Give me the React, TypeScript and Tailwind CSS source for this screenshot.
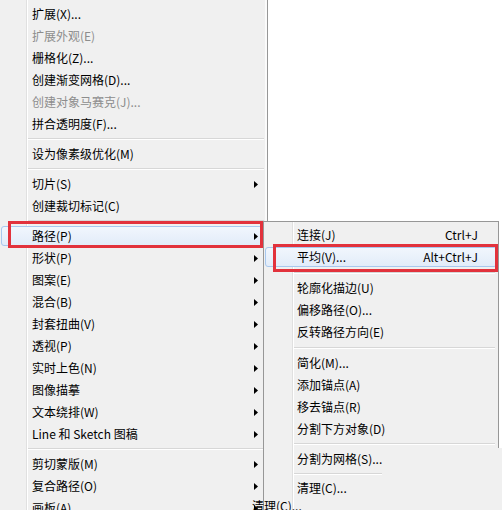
import React from 'react';

type Item =
  | { sep: true; h?: string; short?: boolean }
  | { sep?: false; label: string; disabled?: boolean; arrow?: boolean; shortcut?: string; active?: boolean };

const mainItems: Item[] = [
  { label: '扩展(X)...' },
  { label: '扩展外观(E)', disabled: true },
  { label: '栅格化(Z)...' },
  { label: '创建渐变网格(D)...' },
  { label: '创建对象马赛克(J)...', disabled: true },
  { label: '拼合透明度(F)...' },
  { sep: true },
  { label: '设为像素级优化(M)' },
  { sep: true },
  { label: '切片(S)', arrow: true },
  { label: '创建裁切标记(C)' },
  { sep: true },
  { label: '路径(P)', arrow: true, active: true },
  { label: '形状(P)', arrow: true },
  { label: '图案(E)', arrow: true },
  { label: '混合(B)', arrow: true },
  { label: '封套扭曲(V)', arrow: true },
  { label: '透视(P)', arrow: true },
  { label: '实时上色(N)', arrow: true },
  { label: '图像描摹', arrow: true },
  { label: '文本绕排(W)', arrow: true },
  { label: 'Line 和 Sketch 图稿', arrow: true },
  { sep: true },
  { label: '剪切蒙版(M)', arrow: true },
  { label: '复合路径(O)', arrow: true },
  { label: '画板(A)', arrow: true },
];

const Arrow = () => (
  <svg width="4" height="7" viewBox="0 0 4 7" className="shrink-0">
    <polygon points="0,0 4,3.5 0,7" fill="#000" />
  </svg>
);

const Separator = ({ h = 'h-[8px]', short = false }: { h?: string; short?: boolean }) => (
  <div className={`${h} flex items-center pl-[28px] pr-[3px]`}>
    <div className={`${short ? 'w-[90px]' : 'flex-1'} border-t border-[#d7d7d7] border-b border-b-white`} />
  </div>
);

const MenuRow = ({ item, sub = false }: { item: Exclude<Item, { sep: true }>; sub?: boolean }) => (
  <div className={`relative h-[22px] flex items-center ${sub ? 'pl-[33px] pr-[20px]' : 'pl-[32px] pr-[9px]'}`}>
    {item.active && (
      <div
        className={`absolute top-[1px] bottom-[1px] ${sub ? 'left-[1px] right-[1px]' : 'left-[1px] right-[4px]'} rounded-[3px] border border-[#a8c8ee] bg-gradient-to-b from-[#f1f6fd] to-[#e2ecf9]`}
      />
    )}
    <span className={`relative flex-1 whitespace-nowrap ${item.disabled ? 'text-[#8d8d8d]' : 'text-black'}`}>{item.label}</span>
    {item.shortcut && <span className="relative whitespace-nowrap text-black">{item.shortcut}</span>}
    {item.arrow && (
      <span className="relative">
        <Arrow />
      </span>
    )}
  </div>
);

export default function App() {
  return (
    <div
      className="relative w-[502px] h-[510px] overflow-hidden bg-white text-[12px] leading-[22px]"
      style={{ fontFamily: '"Noto Sans CJK SC", "Microsoft YaHei", sans-serif' }}
    >
      {/* main menu */}
      <div className="relative w-[268px] h-full bg-[#f0f0f0] border-r border-[#979797] shadow-[inset_-2px_0_0_#fbfbfb] pt-[3px]">
        <div className="absolute left-[26px] top-0 bottom-0 w-[2px] border-l border-[#e0e0e0] border-r border-r-white" />
        {mainItems.map((it, i) =>
          it.sep ? <Separator key={i} /> : <MenuRow key={i} item={it} />
        )}
      </div>

      {/* submenu: 路径 */}
      <div className="absolute left-[263px] top-[221px] right-0 bottom-0 flex flex-col">
        <div className="relative mr-[3px] pt-[2px] bg-[#f0f0f0] border-l border-t border-r border-[#979797]">
          <div className="absolute left-[28px] top-0 bottom-0 w-[2px] border-l border-[#e0e0e0] border-r border-r-white" />
          <MenuRow sub item={{ label: '连接(J)', shortcut: 'Ctrl+J' }} />
          <MenuRow sub item={{ label: '平均(V)...', shortcut: 'Alt+Ctrl+J', active: true }} />
          <Separator h="h-[9px]" />
          <MenuRow sub item={{ label: '轮廓化描边(U)' }} />
          <MenuRow sub item={{ label: '偏移路径(O)...' }} />
          <MenuRow sub item={{ label: '反转路径方向(E)' }} />
          <Separator h="h-[9px]" />
          <MenuRow sub item={{ label: '简化(M)...' }} />
          <MenuRow sub item={{ label: '添加锚点(A)' }} />
          <MenuRow sub item={{ label: '移去锚点(R)' }} />
          <MenuRow sub item={{ label: '分割下方对象(D)' }} />
          <Separator h="h-[8px]" />
        </div>
        <div className="relative flex-1 bg-[#f0f0f0] border-l border-[#979797]">
          <div className="absolute left-[28px] top-0 bottom-0 w-[2px] border-l border-[#e0e0e0] border-r border-r-white" />
          <MenuRow sub item={{ label: '分割为网格(S)...' }} />
          <Separator h="h-[7px]" short />
          <MenuRow sub item={{ label: '清理(C)...' }} />
        </div>
      </div>

      {/* ghost text left behind by redraw */}
      <span className="absolute left-[252px] top-[495px] text-black whitespace-nowrap">清理(C)...</span>

      {/* annotation boxes */}
      <div className="absolute left-[8px] top-[221px] w-[255px] h-[27px] border-[3px] border-[#e2323c]" />
      <div className="absolute left-[273px] top-[244px] w-[225px] h-[28px] border-[3px] border-[#e2323c]" />
    </div>
  );
}
